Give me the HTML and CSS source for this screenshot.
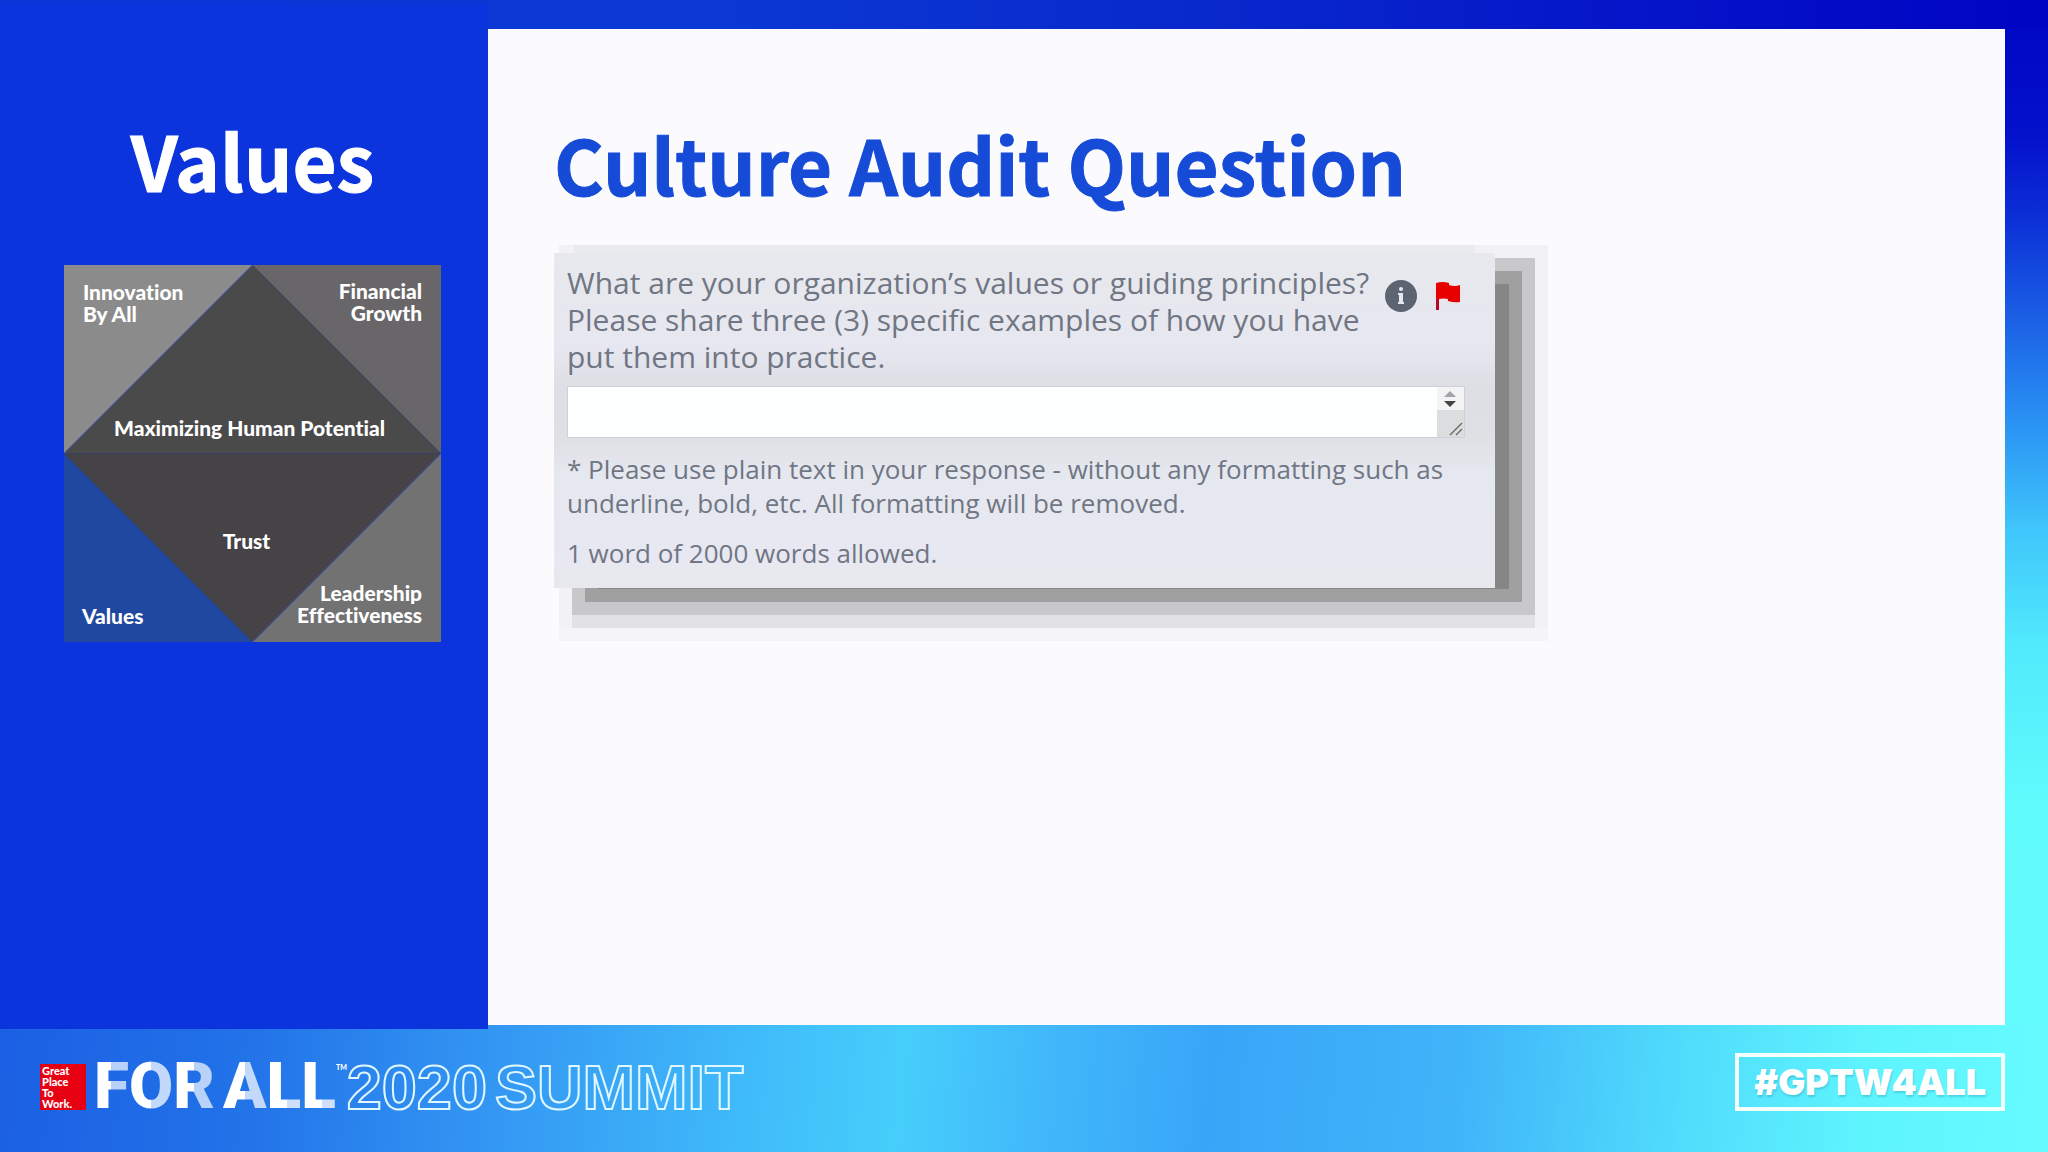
FILE: index.html
```html
<!DOCTYPE html>
<html lang="en">
<head>
    <meta charset="UTF-8">
    <meta name="viewport" content="width=device-width, initial-scale=1.0">
    <title>Values - Culture Audit Question</title>
    <link rel="stylesheet" href="styles.css">
</head>
<body>

    <div class="slide">
        <aside class="sidebar">
            <h2>Values</h2>
            <svg class="model" viewBox="0 0 378 378" role="img" aria-label="For All model">
                <polygon points="0,0 189,0 0,189" fill="#8b8b8b"/>
                <polygon points="189,0 378,0 378,189" fill="#686668"/>
                <polygon points="0,189 189,378 0,378" fill="#2148a0"/>
                <polygon points="378,189 378,378 189,378" fill="#727272"/>
                <polygon points="189,0 378,189 0,189" fill="#4a4a4b"/>
                <polygon points="0,189 378,189 189,378" fill="#454345"/>
                <path d="M189 0L0 189M378 189L189 378" stroke="#3f55a8" stroke-width="1"/>
                <text x="19" y="35">Innovation</text>
                <text x="19" y="57">By All</text>
                <text x="359" y="34" class="end">Financial</text>
                <text x="359" y="56" class="end">Growth</text>
                <text x="186" y="171" class="mid">Maximizing Human Potential</text>
                <text x="183" y="285" class="mid">Trust</text>
                <text x="18" y="360">Values</text>
                <text x="359" y="337" class="end">Leadership</text>
                <text x="359" y="359" class="end">Effectiveness</text>
            </svg>
        </aside>

        <main class="panel">
            <h1>Culture Audit Question</h1>

            <form class="card">
                <div class="question">
                    <label for="answer">What are your organization’s values or guiding principles?<br>
                        Please share three (3) specific examples of how you have<br>
                        put them into practice.</label>
                    <div class="actions">
                        <button type="button" aria-label="More information">
                            <svg width="32" height="32" viewBox="0 0 32 32">
                                <circle cx="16" cy="16" r="16" fill="#5b6470"/>
                                <circle cx="16" cy="9" r="2" fill="#e6e8f0"/>
                                <path d="M13 13h5v9h1v2h-6v-2h1v-7h-1z" fill="#e6e8f0"/>
                            </svg>
                        </button>
                        <button type="button" aria-label="Flag this question">
                            <svg width="26" height="28" viewBox="0 0 26 28">
                                <path d="M1 1Q8 -1 14 1V3Q20 5 25 3V20Q19 21 13 19V17Q8 16 4 17V28H1z" fill="#e60000"/>
                                <path d="M1 17h3v11H1z" fill="#b80a24"/>
                            </svg>
                        </button>
                    </div>
                </div>

                <div class="answer-box">
                    <textarea id="answer"></textarea>
                    <svg class="scroller" width="27" height="50" viewBox="0 0 27 50">
                        <rect width="27" height="50" fill="#dcdddf"/>
                        <rect width="27" height="23" fill="#f3f3f5"/>
                        <path d="M7 10L13 4L19 10z" fill="#a4a4a6"/>
                        <path d="M7 14L19 14L13 20z" fill="#444"/>
                        <path d="M13 48L25 36M19 48L25 42" stroke="#666" stroke-width="1.3"/>
                    </svg>
                </div>

                <p>* Please use plain text in your response - without any formatting such as<br>
                    underline, bold, etc. All formatting will be removed.</p>
                <p>1 word of 2000 words allowed.</p>
            </form>
        </main>

        <footer class="footer">
            <div class="brand">
                <div class="badge">Great<br>Place<br>To<br>Work.</div>
                <div class="for-all">
                    <span class="word"><span class="f">F</span><span class="o">O</span><span class="r">R</span></span>
                    <span class="word"><span class="a">A</span><span class="l">L</span><span class="l">L</span></span>
                </div>
                <div class="tm">TM</div>
                <div class="summit"><span>2020</span><span>SUMMIT</span></div>
            </div>
            <a class="hashtag" href="#">#GPTW4ALL</a>
        </footer>
    </div>

</body>
</html>
```

FILE: styles.css
```css
* {
    box-sizing: border-box;
}

body {
    margin: 0;
    font-family: Lato, sans-serif;
    font-variant-ligatures: none;
}

.slide {
    display: grid;
    grid-template-columns: 488px 1fr;
    grid-template-rows: 1fr 127px;
    min-height: 100vh;
    padding-right: 43px;
    background:
        linear-gradient(to right, #0b36d6 0%, #0b38d4 35%, #0828cc 60%, #0410c8 85%, #0004c4 100%) top / 100% 29px no-repeat,
        linear-gradient(to bottom, #0004c4 0%, #0412cc 12%, #0b30d6 19%, #1c62e6 28%, #2a94f4 37%, #40c6fb 46%, #50eafc 56%, #60fbfc 70%, #66fbff 100%);
}

/* hangs a little over the footer */
.sidebar {
    z-index: 1;
    margin: 3px 0 -4px;
    padding: 100px 47px 0 64px;
    background: #0b34dc;
}

h1, h2 {
    margin: 0;
    font-family: "Noto Sans CJK SC", sans-serif;
    font-size: 76px;
    font-weight: bold;
    line-height: 112px;
    -webkit-text-stroke: 1px currentColor;
}

h2 {
    color: #fff;
    text-align: center;
}

.model {
    display: block;
    width: 100%;
    margin-top: 50px;
}

.model text {
    fill: #fff;
    font-size: 21px;
    font-weight: 900;
}

.model .mid {
    text-anchor: middle;
}

.model .end {
    text-anchor: end;
}

.panel {
    margin-top: 29px;
    padding: 78px 66px 64px;
    background: #fbfafc;
}

h1 {
    color: #164bd8;
}

/* stepped shadow: flat layers, each one wider and lighter */
.card {
    max-width: 941px;
    margin-top: 34px;
    padding: 11px 30px 18px 13px;
    background: linear-gradient(#e8e9ed 0%, #e6e7f0 28%, #dedfe5 40%, #dfe0e4 55%, #e6e8f0 66%, #e7e8f1 92%, #e8e9ec 100%);
    box-shadow:
        0 -28px 0 -20px #eaebed,
        29px 16px 0 -15px #868687,
        29px 16px 0 -2px #a0a0a1,
        29px 16px 0 11px #c8c7c9,
        29px 29px 0 11px #e2e1e3,
        29px 16px 0 24px #f2f1f3,
        29px 29px 0 24px #f5f4f6;
    color: #707683;
    font-family: "Open Sans", sans-serif;
}

.question {
    display: flex;
    justify-content: space-between;
}

.question label {
    font-size: 30px;
    line-height: 37px;
    white-space: nowrap;
}

.actions {
    display: flex;
    align-items: center;
    gap: 18px;
    height: 63px;
    padding-right: 4px;
}

.actions button {
    padding: 0;
    border: none;
    background: none;
    cursor: pointer;
}

.actions svg {
    display: block;
}

.answer-box {
    display: flex;
    margin: 11px 0 14px;
    border: 1px solid #cdd0d6;
    background: #fdfefe;
}

.answer-box textarea {
    flex: 1;
    height: 50px;
    padding: 8px;
    border: none;
    outline: none;
    resize: none;
    background: none;
    font: inherit;
    font-size: 26px;
}

.card p {
    margin: 0 0 16px;
    font-size: 26px;
    line-height: 34px;
}

.card p:last-child {
    margin-bottom: 0;
}

.footer {
    grid-column: 1 / -1;
    display: flex;
    align-items: center;
    justify-content: space-between;
    margin-right: -43px;
    padding: 0 43px 14px 40px;
    background: linear-gradient(95deg, #1b60e4 0%, #2272e8 12%, #3396f3 24%, #40bcfa 37%, #46cefb 44%, #41b8fa 51%, #38a6f8 59%, #40b4f9 71%, #50dcfc 82%, #5ef4fe 91%, #66fbff 100%);
    color: #fff;
}

.brand {
    display: flex;
    align-items: center;
    margin-top: 10px;
}

.badge {
    width: 46px;
    height: 46px;
    margin-right: 8px;
    padding: 1px 2px;
    background: #e60012;
    font-size: 11px;
    font-weight: 900;
    line-height: 11px;
}

.for-all {
    display: flex;
    gap: 8px;
    font-family: Roboto, sans-serif;
    font-size: 64px;
    font-weight: 900;
    line-height: 64px;
}

.word span {
    background-clip: text;
    -webkit-background-clip: text;
    color: transparent;
}

.f, .r {
    background-image: linear-gradient(to right, #fff 50%, #b9d2fa 50%);
}

.o, .a {
    background-image: linear-gradient(to right, #fff 50%, #c3d9fb 50%);
}

.l {
    background-image: linear-gradient(to right, #fff 60%, #d0e0fb 60%);
}

.tm {
    align-self: flex-start;
    font-size: 7px;
    font-weight: 900;
    line-height: 24px;
}

.summit {
    display: flex;
    gap: 8px;
    font-family: "Liberation Sans", Arial, sans-serif;
    font-size: 63px;
    font-weight: bold;
    line-height: 64px;
    color: transparent;
    -webkit-text-stroke: 2px #e0f7ff;
}

.hashtag {
    padding: 6px 15px;
    border: 4px solid #f4ffff;
    color: #fff;
    font-family: Inter, sans-serif;
    font-size: 36px;
    font-weight: 900;
    line-height: 38px;
    text-decoration: none;
    text-shadow: 1px 2px 2px rgba(0, 110, 150, 0.25);
}
```
